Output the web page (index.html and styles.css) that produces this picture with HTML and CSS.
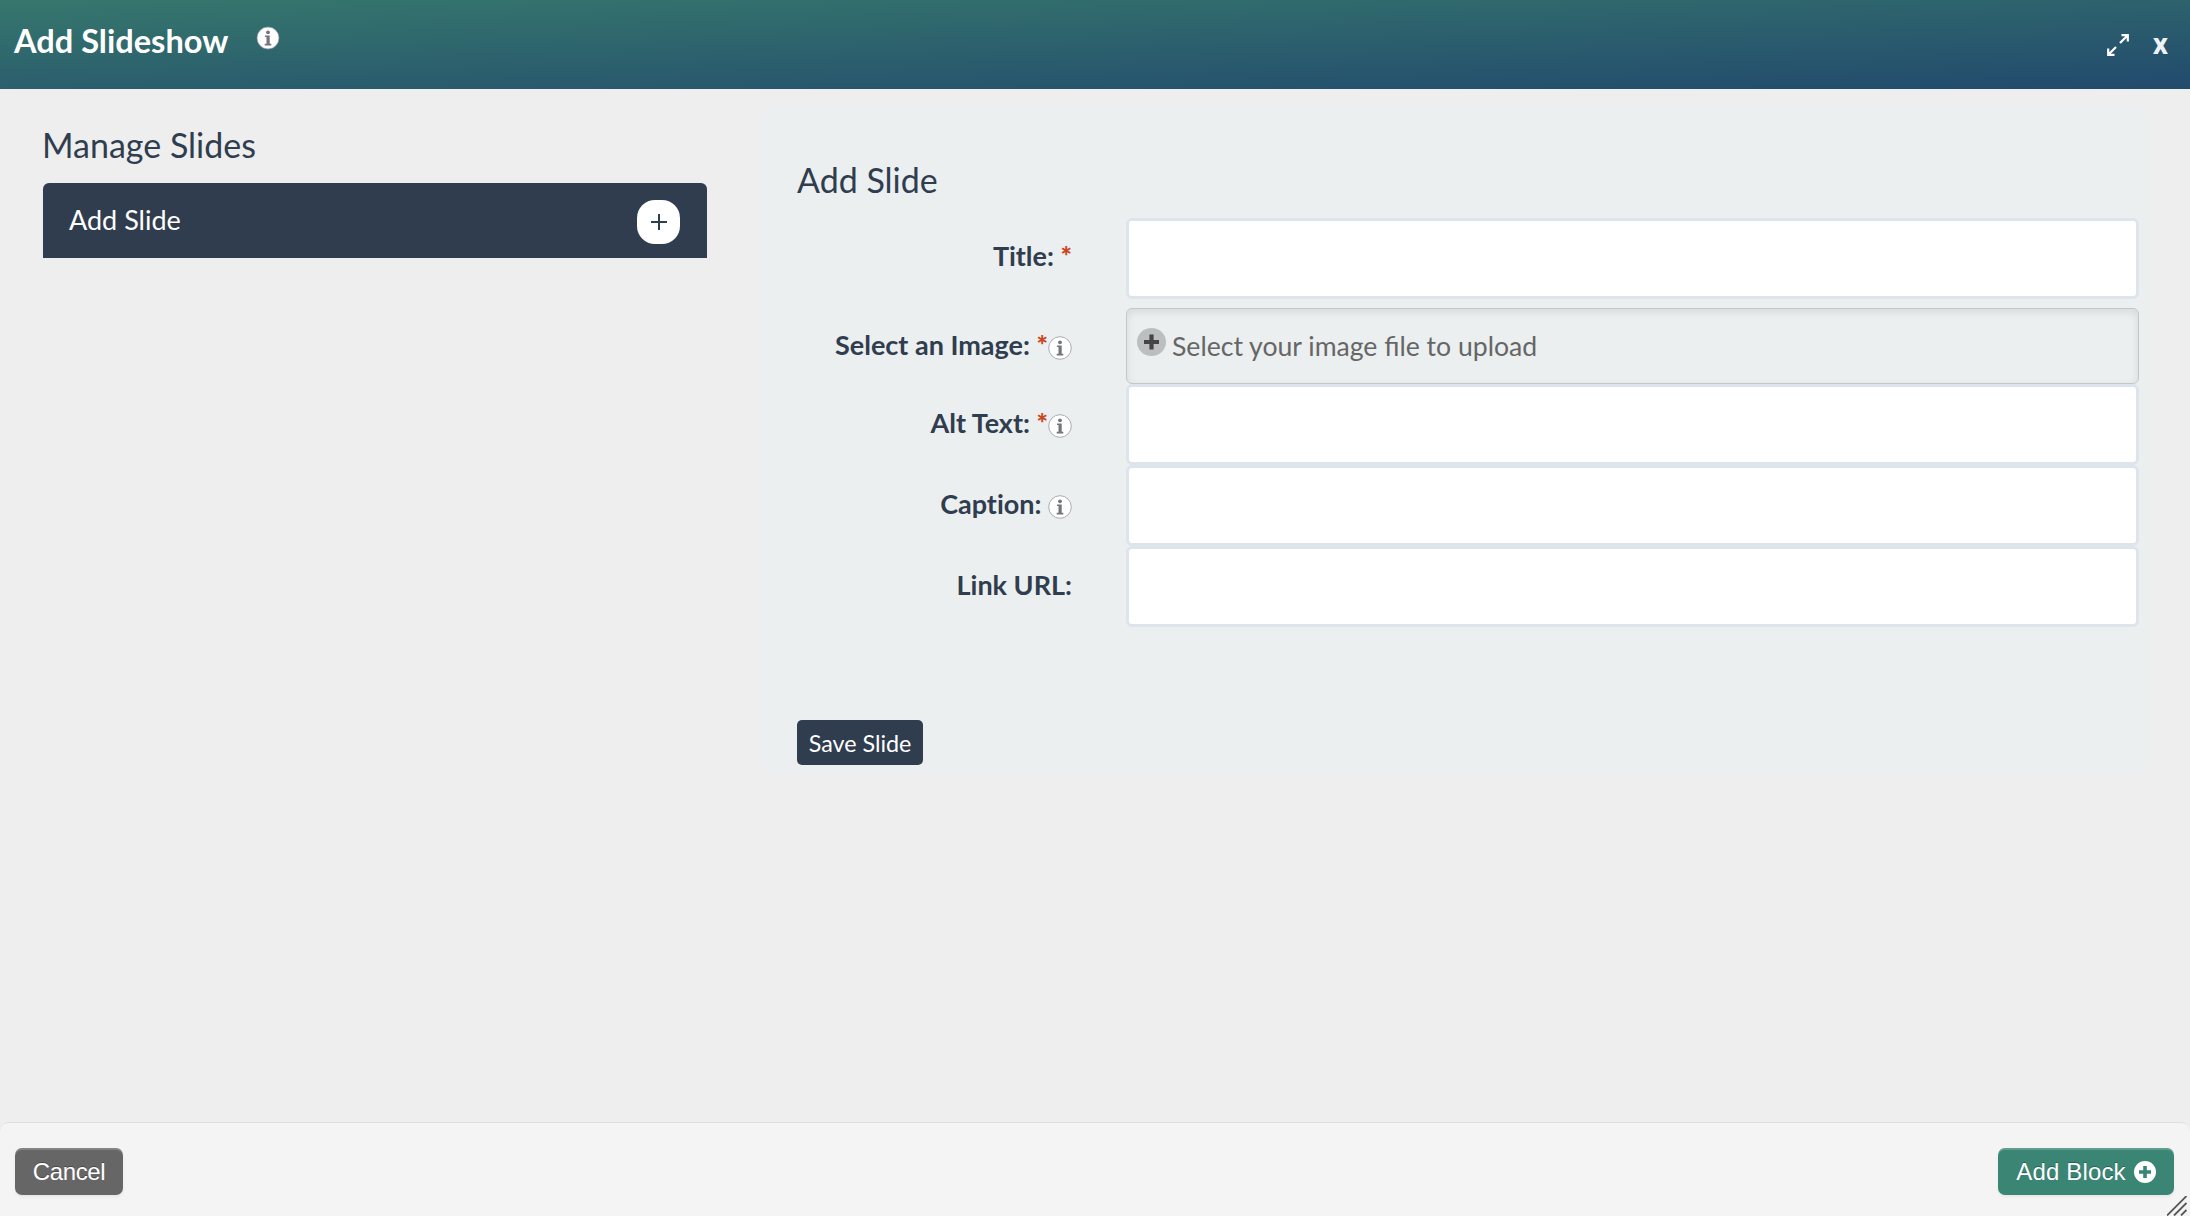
FILE: index.html
```html
<!DOCTYPE html>
<html lang="en">
    <head>
        <meta charset="utf-8">
        <link rel="stylesheet" href="styles.css">
        <title>Add Slideshow</title>
    </head>
    <body>
        <header class="dialog-header">
            <h1>Add Slideshow</h1>
            <svg class="title-info" viewBox="0 0 24 24">
                <circle cx="12" cy="12" r="11" fill="#fff" stroke="#8a8f94" stroke-width=".7"/>
                <circle cx="12" cy="6.3" r="1.9" fill="#74757c"/>
                <path d="M9 9.5h4.7v8.3H15.3v1.6H8.7v-1.6h1.8v-6.7H9z" fill="#74757c"/>
            </svg>
            <div class="window-tools">
                <svg class="expand" viewBox="0 0 22 22" fill="none" stroke="#fff" stroke-width="2.2">
                    <path d="M13 9l7-7M14.500 1.200h6.300v6.300M9 13l-7 7M1.200 14.500v6.300h6.300"/>
                </svg>
                <span class="close">x</span>
            </div>
        </header>

        <main class="dialog-body">
            <section class="slides">
                <h2>Manage Slides</h2>
                <div class="slide-bar">
                    <span>Add Slide</span>
                    <button class="slide-plus" type="button" aria-label="Add Slide">
                        <svg viewBox="0 0 16 16" fill="none" stroke="#303d4f" stroke-width="2"><path d="M8 0v16M0 8h16"/></svg>
                    </button>
                </div>
            </section>

            <form class="slide-form">
                <h2>Add Slide</h2>
                <div class="row row-title">
                    <label for="title">Title: <span class="req">*</span></label>
                    <input type="text" id="title" name="title">
                </div>
                <div class="row row-upload">
                    <label>Select an Image: <span class="req">*</span><svg class="info" viewBox="0 0 24 24"><circle cx="12" cy="12" r="11.300" fill="#fff" stroke="#aaabae"/><circle cx="12" cy="6.300" r="1.900" fill="#74757c"/><path d="M9 9.500h4.700v8.300H15.300v1.600H8.700v-1.600h1.800v-6.700H9z" fill="#74757c"/></svg></label>
                    <div class="upload">
                        <svg class="upload-plus" viewBox="0 0 29 28"><ellipse cx="14.500" cy="14" rx="14.500" ry="14" fill="#bcbec0"/><path d="M14.500 6.500v15M7 14h15" stroke="#444" stroke-width="4.200"/></svg>
                        <span>Select your image file to upload</span>
                    </div>
                </div>
                <div class="row">
                    <label for="alt">Alt Text: <span class="req">*</span><svg class="info" viewBox="0 0 24 24"><circle cx="12" cy="12" r="11.300" fill="#fff" stroke="#aaabae"/><circle cx="12" cy="6.300" r="1.900" fill="#74757c"/><path d="M9 9.500h4.700v8.300H15.300v1.600H8.700v-1.600h1.800v-6.700H9z" fill="#74757c"/></svg></label>
                    <input type="text" id="alt" name="alt">
                </div>
                <div class="row">
                    <label for="caption">Caption: <svg class="info" viewBox="0 0 24 24"><circle cx="12" cy="12" r="11.300" fill="#fff" stroke="#aaabae"/><circle cx="12" cy="6.300" r="1.900" fill="#74757c"/><path d="M9 9.500h4.700v8.300H15.300v1.600H8.700v-1.600h1.800v-6.700H9z" fill="#74757c"/></svg></label>
                    <input type="text" id="caption" name="caption">
                </div>
                <div class="row">
                    <label for="link">Link URL:</label>
                    <input type="text" id="link" name="link">
                </div>
                <button class="save" type="button">Save Slide</button>
            </form>
        </main>

        <footer class="dialog-footer">
            <button class="btn btn-cancel" type="button">Cancel</button>
            <button class="btn btn-add" type="button">Add Block
                <svg viewBox="0 0 22 22"><circle cx="11" cy="11" r="11" fill="#fff"/><path d="M11 5v12M5 11h12" stroke="#3a8573" stroke-width="3.600"/></svg>
            </button>
            <svg class="resize" viewBox="0 0 20 20" stroke="#555" stroke-width="1.800"><path d="M0 19.500L19.500 0M7 19.500L19.500 7M14 19.500L19.500 14"/></svg>
        </footer>
    </body>
</html>
```

FILE: styles.css
```css
* {
    box-sizing: border-box;
}

body {
    display: flex;
    flex-direction: column;
    height: 1216px;
    margin: 0;
    overflow: hidden;
    background: #eee;
    color: #303d4f;
    font-family: Lato, sans-serif;
    font-size: 27px;
}

h1,
h2 {
    margin: 0;
}

h2 {
    font-size: 34px;
    font-weight: 400;
    line-height: 40px;
}

svg {
    display: block;
    flex: none;
}

button {
    border: 0;
    font-family: inherit;
    color: #fff;
}

/* header */
.dialog-header {
    display: flex;
    align-items: flex-start;
    height: 89px;
    padding: 0 22px 0 14px;
    background: linear-gradient(178deg, #36776d, #224a6d);
    color: #fff;
}

.dialog-header h1 {
    margin-top: 22px;
    font-size: 32.6px;
    line-height: 38px;
}

.title-info {
    width: 24px;
    height: 24px;
    margin: 26px 0 0 28px;
}

.window-tools {
    display: flex;
    margin: 34px 0 0 auto;
}

.expand {
    width: 22px;
    height: 22px;
}

.close {
    margin: -7px 0 0 24px;
    color: #f0f3f5;
    font: bold 30px/34px Roboto, sans-serif;
}

/* columns */
.dialog-body {
    display: flex;
    flex: 1;
    align-items: flex-start;
    justify-content: space-between;
    padding: 18px 42px 0 43px;
}

.slides {
    width: 664px;
    padding-top: 18px;
}

.slides h2 {
    margin-left: -1px;
}

.slide-bar {
    display: flex;
    align-items: center;
    justify-content: space-between;
    height: 75px;
    margin-top: 18px;
    padding: 0 27px 0 26px;
    border-radius: 6px 6px 0 0;
    background: #303d4f;
    color: #fff;
}

.slide-bar span {
    margin-top: -2px;
}

.slide-plus {
    display: flex;
    align-items: center;
    justify-content: center;
    width: 43px;
    height: 44px;
    margin-top: 3px;
    padding: 0;
    border-radius: 18px;
    background: #fff;
}

.slide-plus svg {
    width: 16px;
    height: 16px;
}

.slide-form {
    width: 1387px;
    height: 666px;
    padding: 53px 9px 0 36px;
    border-radius: 6px;
    background: #ebeff0;
}

.slide-form h2 {
    margin-bottom: 18px;
}

.row {
    display: flex;
    justify-content: space-between;
    height: 81px;
}

.row label {
    width: 275px;
    padding-top: 22px;
    font-weight: 700;
    font-variant-ligatures: none;
    line-height: 34px;
    text-align: right;
    white-space: nowrap;
}

.row-title label {
    padding-top: 21px;
}

.row input {
    width: 1013px;
    height: 81px;
    border: 3px solid #dde4ec;
    border-radius: 6px;
    background: #fff;
}

.req {
    color: #cc4420;
    font-weight: 900;
}

.info {
    display: inline-block;
    width: 24px;
    height: 24px;
    vertical-align: -5px;
}

.row-upload {
    height: 76px;
    margin-top: 9px;
}

.row-upload label {
    padding-top: 20px;
}

.upload {
    display: flex;
    width: 1013px;
    padding: 20px 10px 0;
    border: 1px solid #c4c6c7;
    border-radius: 6px;
    box-shadow: inset 0 3px 8px rgba(0, 0, 0, .09);
    color: #666;
    font-size: 26.6px;
    line-height: 34px;
}

.upload-plus {
    width: 29px;
    height: 28px;
    margin: -1px 6px 0 0;
}

.save {
    width: 126px;
    height: 45px;
    margin-top: 93px;
    padding: 0;
    border-radius: 5px;
    background: #303d4f;
    font-size: 23.3px;
}

/* footer */
.dialog-footer {
    position: relative;
    display: flex;
    align-items: flex-start;
    justify-content: space-between;
    height: 94px;
    padding: 25px 16px 0 15px;
    border-top: 1px solid #ddd;
    border-radius: 9px 9px 0 0;
    background: #f4f4f4;
}

.btn {
    display: flex;
    align-items: center;
    justify-content: center;
    height: 47px;
    padding: 0;
    border-radius: 7px;
    background: #666;
    box-shadow: inset 0 2px 0 rgba(255, 255, 255, .2), 0 2px 3px rgba(0, 0, 0, .05);
    font-family: "Liberation Sans", Arial, sans-serif;
    font-size: 24px;
    text-shadow: 0 -1px 0 rgba(0, 0, 0, .3);
}

.btn-cancel {
    width: 108px;
    letter-spacing: -.4px;
}

.btn-add {
    width: 176px;
    background: #3a8573;
    letter-spacing: .15px;
}

.btn-add svg {
    width: 22px;
    height: 22px;
    margin-left: 8px;
}

.resize {
    position: absolute;
    right: 3px;
    bottom: 0;
    width: 20px;
    height: 20px;
}
```
